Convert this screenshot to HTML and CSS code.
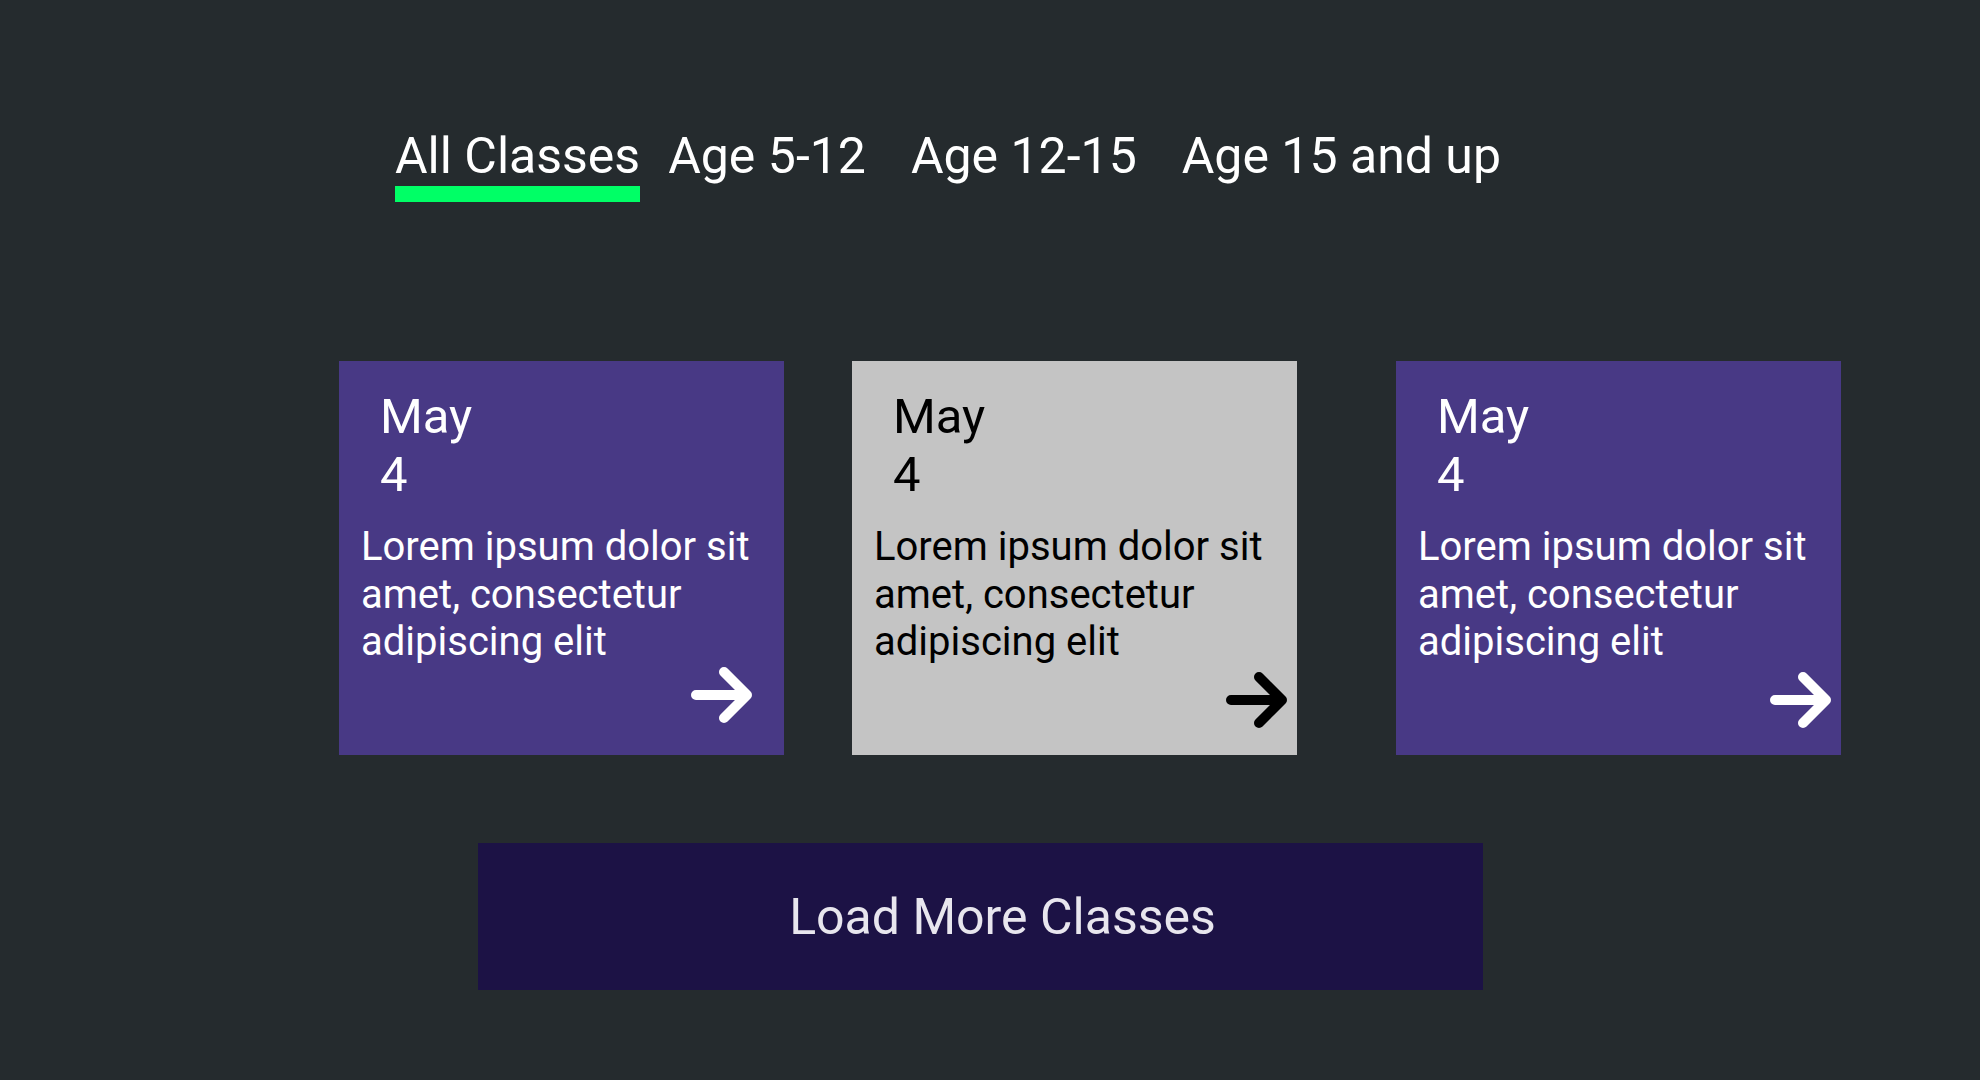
FILE: index.html
```html
<!DOCTYPE html>
<html lang="en">
<head>
<meta charset="utf-8">
<title>Classes</title>
<link rel="stylesheet" href="styles.css">
</head>
<body>
<div class="page">
  <nav class="tabs">
    <a class="tab tab-active">All Classes</a>
    <a class="tab">Age 5-12</a>
    <a class="tab">Age 12-15</a>
    <a class="tab">Age 15 and up</a>
  </nav>

  <section class="cards">
    <article class="card card-purple card-first">
      <div class="date">May<br>4</div>
      <p class="desc">Lorem ipsum dolor sit amet, consectetur adipiscing elit</p>
      <svg class="arrow" width="62" height="56" viewBox="0 0 62 56"><path d="M5 28H55M33 5L56 28L33 51" fill="none" stroke="currentColor" stroke-width="10" stroke-linecap="round" stroke-linejoin="round"/></svg>
    </article>
    <article class="card card-grey card-second">
      <div class="date">May<br>4</div>
      <p class="desc">Lorem ipsum dolor sit amet, consectetur adipiscing elit</p>
      <svg class="arrow" width="62" height="56" viewBox="0 0 62 56"><path d="M5 28H55M33 5L56 28L33 51" fill="none" stroke="currentColor" stroke-width="10" stroke-linecap="round" stroke-linejoin="round"/></svg>
    </article>
    <article class="card card-purple card-third">
      <div class="date">May<br>4</div>
      <p class="desc">Lorem ipsum dolor sit amet, consectetur adipiscing elit</p>
      <svg class="arrow" width="62" height="56" viewBox="0 0 62 56"><path d="M5 28H55M33 5L56 28L33 51" fill="none" stroke="currentColor" stroke-width="10" stroke-linecap="round" stroke-linejoin="round"/></svg>
    </article>
  </section>

  <div class="more-wrap">
    <button class="more">Load More Classes</button>
  </div>
</div>
</body>
</html>
```
FILE: styles.css
```css
html, body {
  margin: 0;
  padding: 0;
  background: #252b2e;
}
body {
  font-family: Roboto, "Liberation Sans", sans-serif;
  width: 1980px;
  height: 1080px;
  overflow: hidden;
}
.page {
  display: flex;
  flex-direction: column;
}
.tabs {
  display: flex;
  align-items: flex-start;
  padding: 128px 0 0 395px;
}
.tab {
  display: flex;
  flex-direction: column;
  font-size: 50px;
  line-height: 56px;
  color: #ffffff;
  margin-right: 45px;
}
.tab-active {
  margin-right: 28px;
}
.tab-active::after {
  content: "";
  display: block;
  height: 16px;
  margin-top: 2px;
  background: #00ff66;
}
.cards {
  display: flex;
  margin-top: 159px;
  padding-left: 339px;
}
.card {
  width: 445px;
  height: 394px;
  box-sizing: border-box;
  display: flex;
  flex-direction: column;
  padding-top: 27px;
}
.card-purple {
  background: #483985;
  color: #ffffff;
}
.card-grey {
  background: #c4c4c4;
  color: #000000;
}
.card-second {
  margin-left: 68px;
}
.card-third {
  margin-left: 99px;
}
.date {
  font-size: 49px;
  line-height: 58px;
  padding-left: 41px;
}
.desc {
  margin: 19px 0 0 22px;
  font-size: 40px;
  line-height: 47.5px;
}
.arrow {
  display: block;
  margin-top: auto;
  align-self: flex-end;
  margin-right: 9px;
  margin-bottom: 27px;
}
.card-first .arrow {
  margin-right: 31px;
  margin-bottom: 32px;
}
.more-wrap {
  display: flex;
  margin-top: 88px;
  padding-left: 478px;
}
.more {
  width: 1005px;
  height: 147px;
  border: 0;
  margin: 0;
  padding: 0 0 0 44px;
  background: #1c1245;
  color: #e8e6ee;
  font-family: Roboto, "Liberation Sans", sans-serif;
  font-size: 50px;
  line-height: 58px;
}
```
